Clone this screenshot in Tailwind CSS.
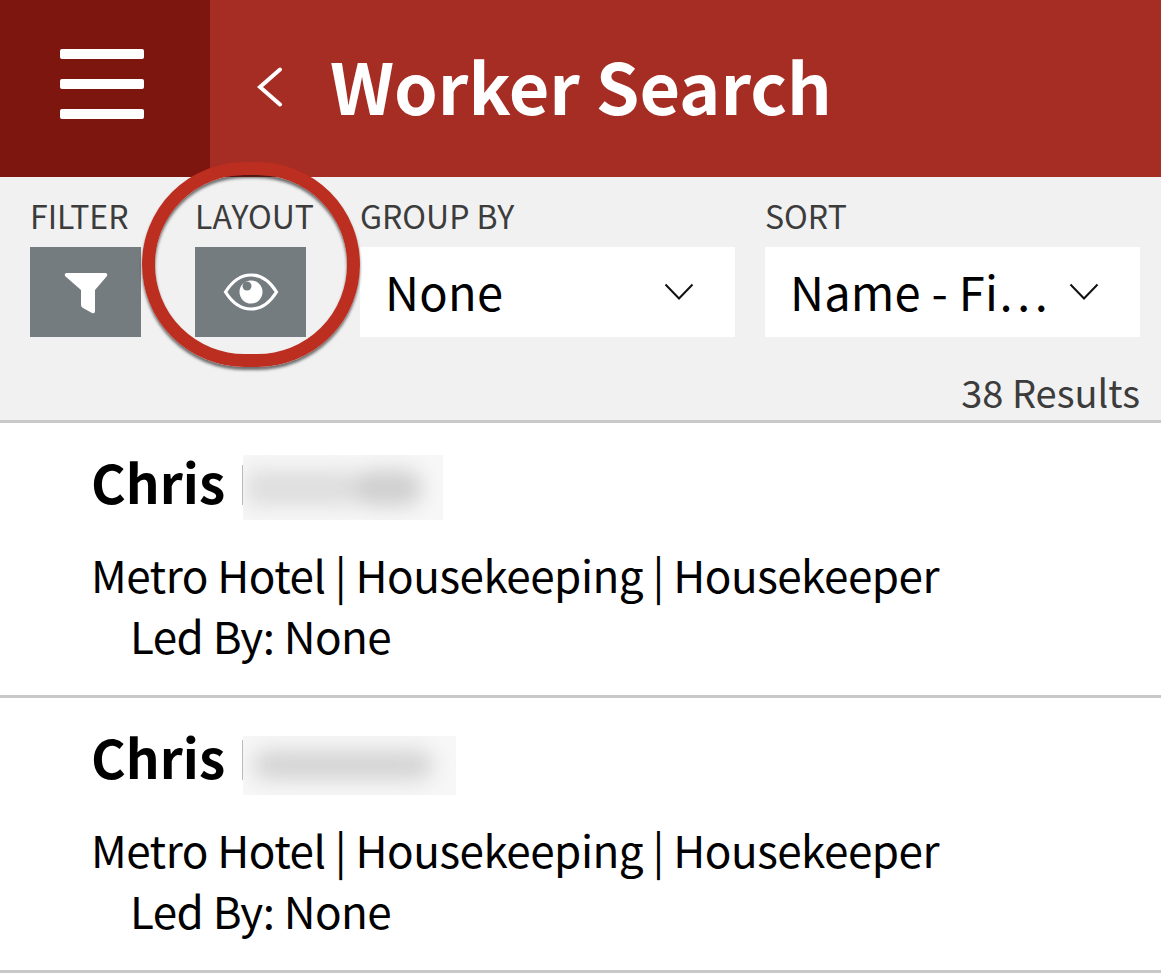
<!DOCTYPE html>
<html><head><meta charset="utf-8">
<script src="https://cdn.jsdelivr.net/npm/@tailwindcss/browser@4"></script>
</head>
<body class="m-0 bg-white overflow-hidden font-['Noto_Sans_CJK_SC','Noto_Sans',sans-serif]">
<div class="relative w-[1161px] h-[976px] bg-white overflow-hidden">
  <header class="flex h-[177px] bg-[#a62d24]">
    <div class="w-[210px] bg-[#7d160e] flex items-center justify-center pr-[6px] pb-[10px]">
      <div class="flex flex-col gap-[20px]">
        <div class="w-[84px] h-[10px] rounded-[2px] bg-white"></div>
        <div class="w-[84px] h-[10px] rounded-[2px] bg-white"></div>
        <div class="w-[84px] h-[10px] rounded-[2px] bg-white"></div>
      </div>
    </div>
    <div class="flex items-center pl-[47px] pb-[2px]">
      <svg width="28" height="42" viewBox="0 0 28 42" class="block mt-[-1px]"><path d="M23 3.5 L3 21 L23 38.5" fill="none" stroke="#fff" stroke-width="4" stroke-linecap="round" stroke-linejoin="miter"/></svg>
      <h1 class="ml-[45px] mb-[6px] text-[70px] leading-none font-bold text-white whitespace-nowrap">Worker Search</h1>
    </div>
  </header>

  <section class="h-[246px] bg-[#f1f1f1] border-b-[3px] border-[#c8c8c8] box-border pl-[30px] pr-[21px]">
    <div class="flex pt-[20px]">
      <div class="w-[111px] mr-[54px]">
        <div class="h-[36px] text-[32px] leading-[36px] text-[#3c3c3c]">FILTER</div>
        <div class="mt-[14px] h-[90px] bg-[#757c80] flex items-center justify-center">
          <svg width="44" height="44" viewBox="0 0 44 44"><path d="M2 3 H42 Q44 4 43 6 L31 20 V41 Q31 44 28 43 L19 38 Q17 37 17 35 V20 L1 6 Q0 4 2 3 Z" fill="#fff"/></svg>
        </div>
      </div>
      <div class="w-[111px] mr-[54px]">
        <div class="h-[36px] text-[32px] leading-[36px] text-[#3c3c3c] whitespace-nowrap">LAYOUT</div>
        <div class="mt-[14px] h-[90px] bg-[#757c80] flex items-center justify-center">
          <svg width="56" height="38" viewBox="0 0 56 38"><path d="M2.5 19 C10 7 19 2 28 2 C37 2 46 7 53.5 19 C46 31 37 36 28 36 C19 36 10 31 2.5 19 Z" fill="none" stroke="#fff" stroke-width="3.2"/><circle cx="28" cy="19" r="11.5" fill="#fff"/><circle cx="24" cy="13" r="4.5" fill="#757c80"/></svg>
        </div>
      </div>
      <div class="w-[375px] mr-[30px]">
        <div class="h-[36px] text-[32px] leading-[36px] text-[#3c3c3c]">GROUP BY</div>
        <div class="mt-[14px] h-[90px] bg-white flex items-center pl-[25px] pr-[41px] justify-between">
          <span class="text-[47px] leading-none tracking-[0.3px] text-black mt-[-4px]">None</span>
          <svg width="30" height="18" viewBox="0 0 30 18"><path d="M1.5 1.5 L15 15.5 L28.5 1.5" fill="none" stroke="#111" stroke-width="2"/></svg>
        </div>
      </div>
      <div class="w-[375px]">
        <div class="h-[36px] text-[32px] leading-[36px] text-[#3c3c3c]">SORT</div>
        <div class="mt-[14px] h-[90px] bg-white flex items-center pl-[25px] pr-[41px] justify-between">
          <span class="text-[47px] leading-none tracking-[0.2px] text-black whitespace-nowrap mt-[-4px]">Name - Fi…</span>
          <svg width="30" height="18" viewBox="0 0 30 18"><path d="M1.5 1.5 L15 15.5 L28.5 1.5" fill="none" stroke="#111" stroke-width="2"/></svg>
        </div>
      </div>
    </div>
    <div class="mt-[33px] text-right text-[38px] leading-[44px] text-[#3c3c3c]">38 Results</div>
  </section>

  <article class="h-[275px] border-b-[3px] border-[#c8c8c8] box-border pl-[91px] pt-[32px]">
    <div class="flex items-start h-[65px]">
      <span class="text-[53px] leading-[60px] font-bold text-black w-[151px] mt-[-4px]">Chris</span>
      <div class="w-px h-[40px] mt-[10px] bg-[#bbbbbb]"></div>
      <div class="w-[200px] h-[65px] overflow-hidden bg-[#f7f7f7]"><div class="flex items-center w-[175px] h-[36px] mt-[15px] ml-[4px] blur-[10px]"><div class="w-[105px] h-[36px] bg-[#dedede]"></div><div class="w-[70px] h-[36px] rounded-full bg-[#cfcfcf]"></div></div></div>
    </div>
    <div class="mt-[24px] text-[44px] leading-[61px] tracking-[-0.5px] text-black whitespace-nowrap">Metro Hotel | Housekeeping | Housekeeper</div>
    <div class="pl-[39px] text-[44px] leading-[61px] tracking-[-0.55px] text-black">Led By: None</div>
  </article>
  <article class="h-[275px] border-b-[3px] border-[#c8c8c8] box-border pl-[91px] pt-[38px]">
    <div class="flex items-start h-[59px]">
      <span class="text-[53px] leading-[60px] font-bold text-black w-[151px] mt-[-10px]">Chris</span>
      <div class="w-px h-[40px] mt-[4px] bg-[#bbbbbb]"></div>
      <div class="w-[213px] h-[59px] overflow-hidden bg-[#f7f7f7]"><div class="w-[180px] h-[30px] mt-[14px] ml-[10px] rounded-full bg-[#d4d4d4] blur-[10px]"></div></div>
    </div>
    <div class="mt-[24px] text-[44px] leading-[61px] tracking-[-0.5px] text-black whitespace-nowrap">Metro Hotel | Housekeeping | Housekeeper</div>
    <div class="pl-[39px] text-[44px] leading-[61px] tracking-[-0.55px] text-black">Led By: None</div>
  </article>

  <div class="absolute left-[142px] top-[162px] w-[218px] h-[205px] rounded-full border-[13px] border-[#bc2e20] shadow-[0_3px_3px_rgba(0,0,0,0.55),inset_0_3px_3px_rgba(0,0,0,0.55)]"></div>
</div>
</body></html>
